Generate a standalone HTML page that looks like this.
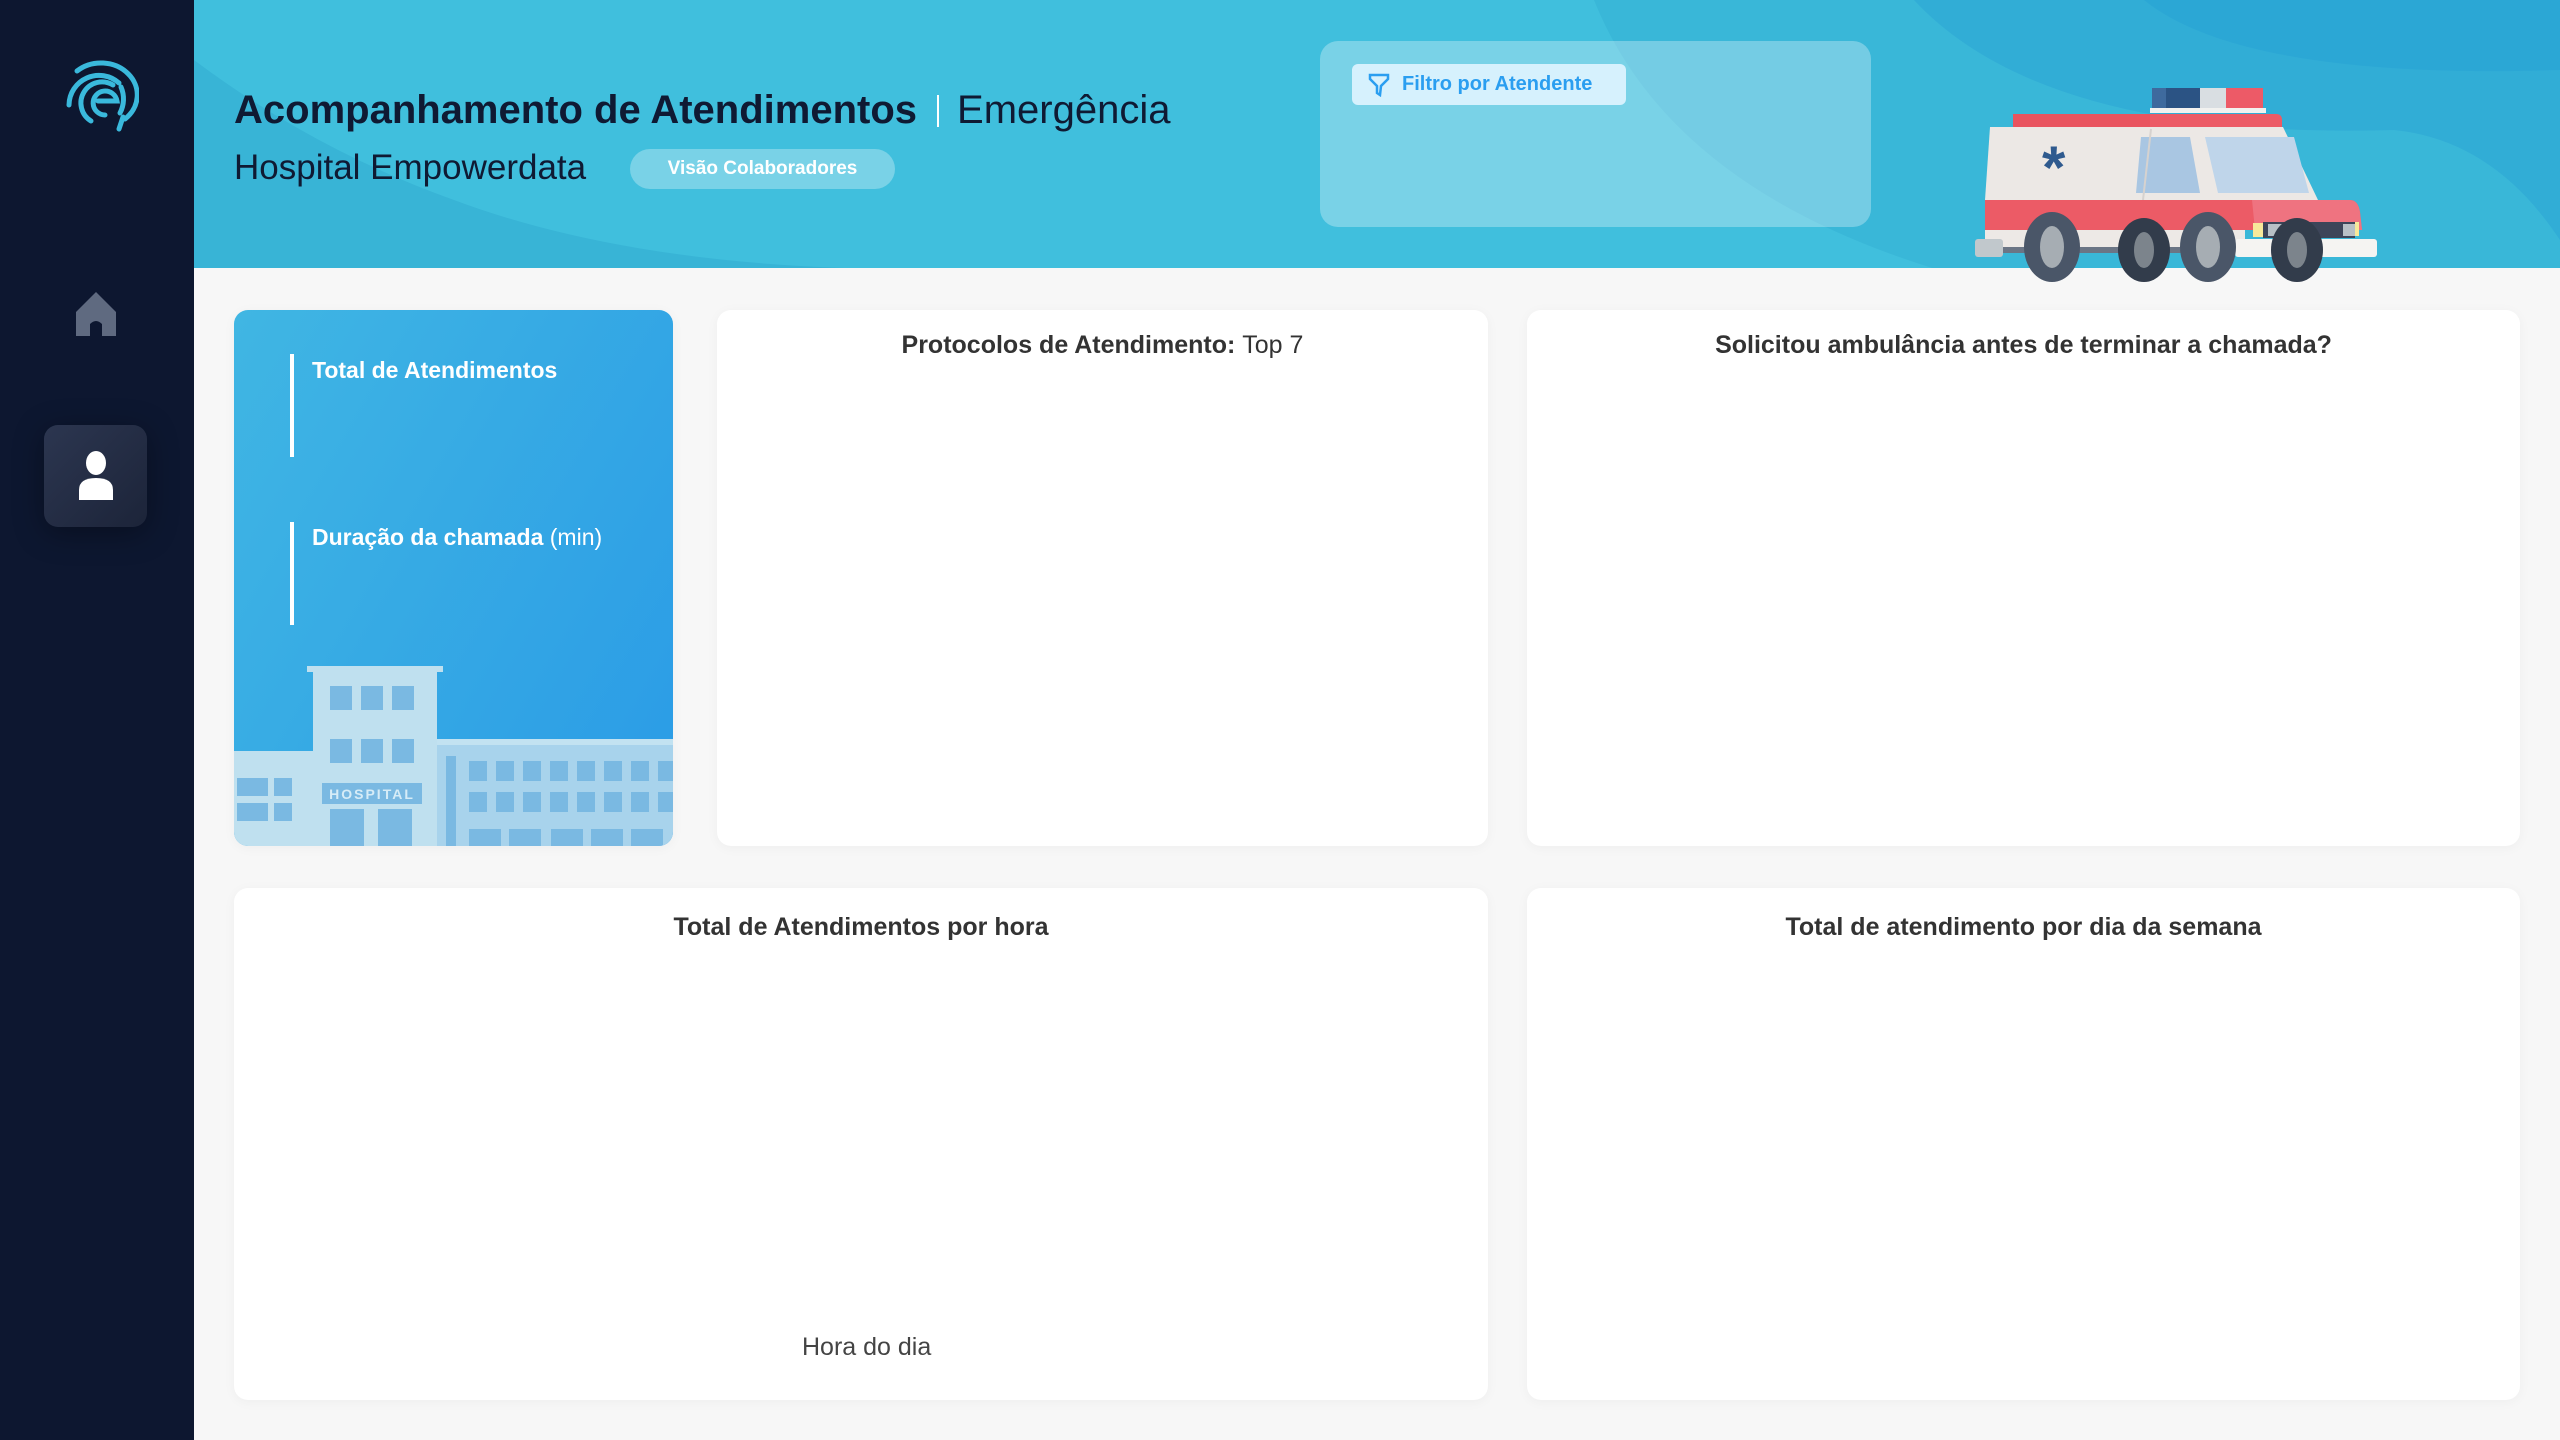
<!DOCTYPE html>
<html><head><meta charset="utf-8"><style>
*{margin:0;padding:0;box-sizing:border-box}
body{width:2560px;height:1440px;overflow:hidden;background:#f7f7f7;font-family:"Liberation Sans",sans-serif;position:relative}
.side{position:absolute;left:0;top:0;width:194px;height:1440px;background:#0d1730}
.hdr{position:absolute;left:194px;top:0;width:2366px;height:268px;background:#40bfdd;overflow:hidden}
.card{position:absolute;background:#fff;border-radius:14px;box-shadow:0 2px 12px rgba(0,0,0,0.04)}
.ct{position:absolute;left:0;right:0;top:330px;text-align:center;font-weight:bold;font-size:25px;color:#333}
</style></head><body>
<div class="side">
<svg style="position:absolute;left:55px;top:55px" width="84" height="84" viewBox="0 0 84 84" fill="none" stroke="#3ab9dc" stroke-width="5" stroke-linecap="round">
<path d="M22 16 A34 30 0 0 1 70 64 M68 62 L64 74"/>
<path d="M14 50 A30 30 0 0 1 64 28 M66 32 A30 30 0 0 1 65 58"/>
<path d="M36 66 A20 20 0 0 1 58 30"/>
<path d="M50 60 A12 12 0 1 1 62 46 L43 46"/>
</svg>
<svg style="position:absolute;left:74px;top:290px" width="44" height="48" viewBox="0 0 44 48"><path d="M22 2 L42 22 L42 46 L28 46 L28 34 Q22 28 16 34 L16 46 L2 46 L2 22 Z" fill="#5f6a80"/></svg>
<div style="position:absolute;left:44px;top:425px;width:103px;height:102px;border-radius:14px;background:linear-gradient(135deg,#2c3650,#1c2439);box-shadow:0 6px 30px rgba(0,0,0,0.35)"></div>
<svg style="position:absolute;left:77px;top:450px" width="38" height="52" viewBox="0 0 38 52"><ellipse cx="19" cy="13" rx="10" ry="12" fill="#fff"/><path d="M2 50 L2 40 Q2 28 19 28 Q36 28 36 40 L36 50 Z" fill="#fff"/></svg>
</div>
<div class="hdr">
<svg width="2366" height="268" style="position:absolute;left:0;top:0">
<path d="M0 60 Q120 150 260 200 Q420 260 650 268 L0 268 Z" fill="#38b4d6"/>
<path d="M1400 0 Q1480 200 1780 280 L2366 268 L2366 0 Z" fill="#36b3d6" opacity="0.7"/>
<path d="M1720 0 Q1850 140 2200 130 Q2300 140 2366 240 L2366 0 Z" fill="#2ea8d5" opacity="0.7"/>
<path d="M1950 0 Q2050 80 2366 70 L2366 0 Z" fill="#2aa5d4" opacity="0.8"/>
</svg>
<div style="position:absolute;left:40px;top:88px;font-size:40px;font-weight:bold;color:#0f1a33;white-space:nowrap">Acompanhamento de Atendimentos<span style="display:inline-block;width:2px;height:32px;background:#fff;margin:0 18px 0 20px;vertical-align:-4px"></span><span style="font-weight:normal">Emergência</span></div>
<div style="position:absolute;left:40px;top:148px;font-size:35px;color:#0f1a33">Hospital Empowerdata</div>
<div style="position:absolute;left:436px;top:149px;width:265px;height:40px;border-radius:20px;background:rgba(255,255,255,0.3);color:#fff;font-size:19px;font-weight:bold;text-align:center;line-height:40px">Visão Colaboradores</div>
<div style="position:absolute;left:1126px;top:41px;width:551px;height:186px;border-radius:18px;background:rgba(255,255,255,0.3)"></div>
<div style="position:absolute;left:1158px;top:64px;width:274px;height:41px;border-radius:6px;background:#d6f1fd;color:#2a9ef0;font-size:20px;font-weight:bold;line-height:41px;padding-left:50px">Filtro por Atendente
<svg style="position:absolute;left:16px;top:9px" width="22" height="24" viewBox="0 0 22 24" fill="none" stroke="#2a9ef0" stroke-width="2.5"><path d="M2 2 L20 2 L20 6 L13 13 L12 22 L9 20 L9 13 L2 6 Z"/></svg></div>
</div>
<svg style="position:absolute;left:1970px;top:85px" width="410" height="200" viewBox="1970 85 410 200">
<rect x="2152" y="88" width="111" height="22" fill="#3e6a9e"/><rect x="2166" y="88" width="34" height="22" fill="#2b5384"/><rect x="2200" y="88" width="26" height="22" fill="#d9dee2"/><rect x="2226" y="88" width="37" height="22" fill="#ed5a67"/><rect x="2150" y="108" width="116" height="5" fill="#f2f2f0"/>
<path d="M2020 114 L2276 114 Q2282 114 2282 120 L2282 127 L2013 127 L2013 120 Q2013 114 2020 114Z" fill="#ec5b66"/>
<path d="M2013 114 L2150 114 L2150 127 L2013 127Z" fill="#e9545f"/>
<path d="M1990 127 L2283 127 L2318 200 L1985 200 Z" fill="#ece8e5"/>
<path d="M2141 137 L2190 137 L2200 193 L2136 193 Z" fill="#a9c6e2"/>
<path d="M2205 137 L2294 137 L2309 193 L2218 193 Z" fill="#bfd5ea"/>
<path d="M2151 129 L2143 200" stroke="#d6d2cf" stroke-width="2"/>
<text x="2042" y="188" font-size="60" fill="#2f5a8e" font-family="Liberation Sans" font-weight="bold">*</text>
<path d="M1985 200 L2350 200 Q2358 200 2360 212 L2362 230 L1985 230 Z" fill="#ec5b66"/>
<path d="M2252 200 L2350 200 Q2358 200 2360 212 L2362 230 L2255 230 Z" fill="#ef7380"/>
<rect x="1985" y="230" width="260" height="18" fill="#ede9e6"/>
<rect x="2000" y="247" width="240" height="6" fill="#6b7585"/>
<rect x="2253" y="223" width="10" height="14" fill="#f7e99a"/><rect x="2263" y="222" width="92" height="16" fill="#3d4559"/><rect x="2268" y="224" width="14" height="12" fill="#b8c0c6"/><rect x="2343" y="224" width="12" height="12" fill="#b8c0c6"/><rect x="2355" y="222" width="4" height="14" fill="#f7e99a"/>
<rect x="2235" y="239" width="142" height="18" rx="3" fill="#f5f4f2"/>
<rect x="1975" y="239" width="28" height="18" rx="3" fill="#c1c8cc"/>
<ellipse cx="2144" cy="250" rx="26" ry="32" fill="#323c4b"/><ellipse cx="2297" cy="250" rx="26" ry="32" fill="#323c4b"/>
<ellipse cx="2144" cy="250" rx="10" ry="18" fill="#7c848c"/><ellipse cx="2297" cy="250" rx="10" ry="18" fill="#7c848c"/>
<ellipse cx="2052" cy="247" rx="28" ry="35" fill="#4a5668"/><ellipse cx="2052" cy="247" rx="12" ry="21" fill="#a6adb3"/>
<ellipse cx="2208" cy="247" rx="28" ry="35" fill="#4a5668"/><ellipse cx="2208" cy="247" rx="12" ry="21" fill="#a6adb3"/>
</svg>
<div class="card" style="left:234px;top:310px;width:439px;height:536px;background:linear-gradient(120deg,#40b6e3,#2a9be6);overflow:hidden">
<div style="position:absolute;left:56px;top:44px;width:4px;height:103px;background:#fff"></div>
<div style="position:absolute;left:78px;top:47px;color:#fff;font-weight:bold;font-size:23px">Total de Atendimentos</div>
<div style="position:absolute;left:56px;top:212px;width:4px;height:103px;background:#fff"></div>
<div style="position:absolute;left:78px;top:214px;color:#fff;font-weight:bold;font-size:23px;white-space:nowrap">Duração da chamada <span style="font-weight:normal">(min)</span></div>
<svg style="position:absolute;left:0;top:356px" width="439" height="206" viewBox="0 0 439 206">
<g fill="#bfe0ef"><rect x="0" y="85" width="79" height="121"/><rect x="79" y="5" width="124" height="201"/><rect x="73" y="0" width="136" height="6"/><rect x="203" y="73" width="236" height="133" fill="#a8d3ec"/><rect x="203" y="73" width="236" height="6" fill="#c2e2f1"/></g>
<g fill="#7ab9e2"><rect x="96" y="20" width="22" height="24"/><rect x="127" y="20" width="22" height="24"/><rect x="158" y="20" width="22" height="24"/><rect x="96" y="73" width="22" height="24"/><rect x="127" y="73" width="22" height="24"/><rect x="158" y="73" width="22" height="24"/><rect x="96" y="143" width="34" height="63"/><rect x="144" y="143" width="34" height="63"/>
<rect x="3" y="112" width="14" height="18"/><rect x="16" y="112" width="18" height="18"/><rect x="40" y="112" width="18" height="18"/><rect x="3" y="137" width="14" height="18"/><rect x="16" y="137" width="18" height="18"/><rect x="40" y="137" width="18" height="18"/><rect x="212" y="90" width="10" height="116"/>
<rect x="235" y="95" width="18" height="20"/><rect x="262" y="95" width="18" height="20"/><rect x="289" y="95" width="18" height="20"/><rect x="316" y="95" width="18" height="20"/><rect x="343" y="95" width="18" height="20"/><rect x="370" y="95" width="18" height="20"/><rect x="397" y="95" width="18" height="20"/><rect x="424" y="95" width="15" height="20"/>
<rect x="235" y="126" width="18" height="20"/><rect x="262" y="126" width="18" height="20"/><rect x="289" y="126" width="18" height="20"/><rect x="316" y="126" width="18" height="20"/><rect x="343" y="126" width="18" height="20"/><rect x="370" y="126" width="18" height="20"/><rect x="397" y="126" width="18" height="20"/><rect x="424" y="126" width="15" height="20"/>
<rect x="235" y="163" width="32" height="43"/><rect x="275" y="163" width="32" height="43"/><rect x="317" y="163" width="32" height="43"/><rect x="357" y="163" width="32" height="43"/><rect x="397" y="163" width="32" height="43"/></g>
<rect x="88" y="117" width="100" height="21" fill="#7ab9e2"/><text x="138" y="133" text-anchor="middle" font-size="14" font-weight="bold" fill="#d6ecf7" font-family="Liberation Sans" letter-spacing="2">HOSPITAL</text>
</svg>
</div>
<div class="card" style="left:717px;top:310px;width:771px;height:536px"><div class="ct" style="top:21px">Protocolos de Atendimento: <span style="font-weight:normal">Top 7</span></div></div>
<div class="card" style="left:1527px;top:310px;width:993px;height:536px"><div class="ct" style="top:21px">Solicitou ambulância antes de terminar a chamada?</div></div>
<div class="card" style="left:234px;top:888px;width:1254px;height:512px"><div class="ct" style="top:25px">Total de Atendimentos por hora</div>
<div style="position:absolute;left:568px;top:445px;font-size:25px;color:#444">Hora do dia</div></div>
<div class="card" style="left:1527px;top:888px;width:993px;height:512px"><div class="ct" style="top:25px">Total de atendimento por dia da semana</div></div>
</body></html>
